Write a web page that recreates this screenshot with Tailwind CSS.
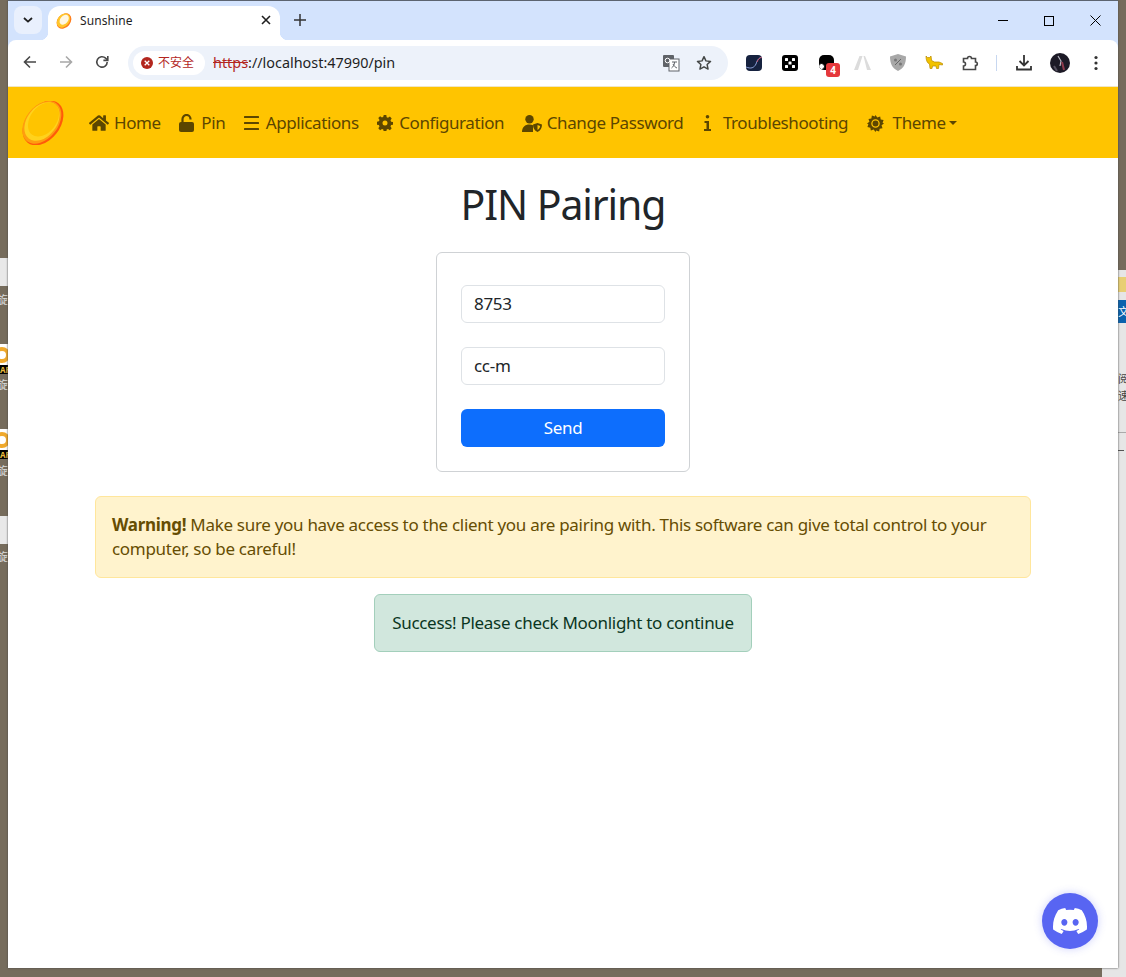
<!DOCTYPE html>
<html lang="en">

<head>
    <meta charset="UTF-8">
    <title>Sunshine</title>
    <script src="https://cdn.jsdelivr.net/npm/@tailwindcss/browser@4"></script>
</head>

<body class="relative w-[1126px] h-[977px] overflow-hidden bg-[#766c5c] font-['Noto_Sans','Noto_Sans_CJK_SC',sans-serif]">

    <!-- Desktop behind the window -->
    <div class="absolute left-0 top-[258px] w-[8px] h-[28px] bg-[#e8e8e8]"></div>
    <div class="absolute left-0 top-[293px] w-[8px] h-[14px] overflow-hidden text-[11px] leading-[14px] text-[#ddd] flex justify-end">旋</div>
    <div class="absolute left-0 top-[344px] w-[8px] h-[30px] bg-white overflow-hidden">
        <div class="w-[16px] h-[16px] -ml-[6px] mt-[3px] rounded-full border-[4px] border-[#f0a92c]"></div>
        <div class="absolute left-0 bottom-0 w-full h-[9px] bg-black text-[#e8b93c] text-[8px] font-bold leading-[9px]">AF</div>
    </div>
    <div class="absolute left-0 top-[378px] w-[8px] h-[14px] overflow-hidden text-[11px] leading-[14px] text-[#ddd] flex justify-end">旋</div>
    <div class="absolute left-0 top-[429px] w-[8px] h-[30px] bg-white overflow-hidden">
        <div class="w-[16px] h-[16px] -ml-[6px] mt-[3px] rounded-full border-[4px] border-[#f0a92c]"></div>
        <div class="absolute left-0 bottom-0 w-full h-[9px] bg-black text-[#e8b93c] text-[8px] font-bold leading-[9px]">AF</div>
    </div>
    <div class="absolute left-0 top-[464px] w-[8px] h-[14px] overflow-hidden text-[11px] leading-[14px] text-[#ddd] flex justify-end">旋</div>
    <div class="absolute left-0 top-[516px] w-[8px] h-[28px] bg-[#e8e8e8]"></div>
    <div class="absolute left-0 top-[550px] w-[8px] h-[14px] overflow-hidden text-[11px] leading-[14px] text-[#ddd] flex justify-end">旋</div>

    <div class="absolute left-[1118px] top-[270px] w-[8px] h-[707px] bg-[#e6e6e6] overflow-hidden">
        <div class="h-[15px] mt-[7px] bg-[#e8cf74]"></div>
        <div class="h-[23px] mt-[8px] bg-[#0a62ad] text-white text-[11px] leading-[23px]">文</div>
        <div class="h-[110px] border-b border-[#aaaaaa] pt-[47px] text-[11px] leading-[17px] text-[#444]">阅<br>速</div>
        <div class="mt-[17px] w-[6px] h-px bg-[#555]"></div>
    </div>
    <div class="absolute left-[1102px] top-[968px] w-[24px] h-[9px] bg-[#e6e6e6]"></div>

    <!-- Browser window -->
    <div class="absolute left-[8px] top-0 w-[1110px] h-[968px] flex flex-col bg-white border-t border-[#5c6470] shadow-[0_0_2px_#444]">

        <!-- Tab strip -->
        <div class="h-[39px] flex bg-[#d3e3fd] items-end relative shrink-0">
            <div class="absolute left-[6px] top-[5px] w-[28px] h-[28px] rounded-lg bg-[#e9f0fd] flex items-center justify-center">
                <svg width="10" height="6" viewBox="0 0 10 6" fill="none" stroke="#1f1f1f" stroke-width="1.8"><path d="M1 1l4 3.6L9 1" /></svg>
            </div>
            <div class="absolute left-[32px] top-[31px] w-[8px] h-[8px] bg-[radial-gradient(circle_at_0_0,#d3e3fd_8px,#ffffff_8.5px)]"></div>
            <div class="absolute left-[40px] top-[5px] w-[232px] h-[34px] bg-white rounded-t-xl flex items-center pl-[8px] pb-[4px]">
                <svg width="16" height="16" viewBox="0 0 16 16">
                    <ellipse cx="8" cy="8" rx="8.500" ry="6.500" transform="rotate(-50 8 8)" fill="#ff7a1a" />
                    <ellipse cx="7.500" cy="7.600" rx="7.800" ry="5.800" transform="rotate(-50 7.500 7.600)" fill="#ffc62b" />
                    <ellipse cx="8.200" cy="6.800" rx="5.600" ry="3.800" transform="rotate(-50 8.200 6.800)" fill="#fff6e2" />
                </svg>
                <span class="ml-[8px] text-[12px] tracking-[0.1px] text-[#1f1f1f]">Sunshine</span>
                <svg class="absolute right-[9px] top-[9px]" width="10" height="10" viewBox="0 0 10 10" stroke="#1f1f1f" stroke-width="1.6"><path d="M1 1l8 8M9 1l-8 8" /></svg>
            </div>
            <div class="absolute left-[272px] top-[31px] w-[8px] h-[8px] bg-[radial-gradient(circle_at_100%_0,#d3e3fd_8px,#ffffff_8.5px)]"></div>
            <svg class="absolute left-[286px] top-[13px]" width="12" height="12" viewBox="0 0 12 12" stroke="#333333" stroke-width="1.5"><path d="M6 0v12M0 6h12" /></svg>
            <div class="absolute right-0 top-0 h-[39px] flex items-center">
                <div class="w-[46px] flex justify-center"><div class="w-[10px] h-px bg-black"></div></div>
                <div class="w-[46px] flex justify-center"><div class="w-[10px] h-[10px] border border-black"></div></div>
                <div class="w-[46px] flex justify-center">
                    <svg width="11" height="11" viewBox="0 0 11 11" stroke="#000" stroke-width="1"><path d="M.5.5l10 10M10.5.5l-10 10" /></svg>
                </div>
            </div>
        </div>

        <!-- Toolbar -->
        <div class="bg-[#d3e3fd] shrink-0">
            <div class="h-[47px] bg-white flex items-center relative border-b border-[#f0e6c4] rounded-t-lg">
                <svg class="absolute left-[15px] top-[15px]" width="14" height="14" viewBox="0 0 14 14" fill="none" stroke="#474747" stroke-width="1.6"><path d="M13 7H1.500M7 1.500L1.500 7 7 12.500" /></svg>
                <svg class="absolute left-[51px] top-[15px]" width="14" height="14" viewBox="0 0 14 14" fill="none" stroke="#a8a8a8" stroke-width="1.6"><path d="M1 7h11.500M7 1.500L12.500 7 7 12.500" /></svg>
                <svg class="absolute left-[87px] top-[15px]" width="14" height="14" viewBox="0 0 14 14" fill="none" stroke="#474747" stroke-width="1.6"><path d="M12.200 7A5.200 5.200 0 1 1 10.600 3.200L12.600 5" /><path d="M12.800 1v4.400H8.400" /></svg>

                <!-- Address bar -->
                <div class="absolute left-[120px] top-[6px] w-[600px] h-[34px] rounded-full bg-[#edf2fa] flex items-center pl-[5px]">
                    <div class="h-[24px] w-[72px] bg-white rounded-full flex items-center pl-[8px]">
                        <div class="w-[12px] h-[12px] rounded-full bg-[#b3261e] flex items-center justify-center">
                            <svg width="6" height="6" viewBox="0 0 6 6" stroke="#fff" stroke-width="1.3"><path d="M.7.7l4.600 4.600M5.300.7L.7 5.300" /></svg>
                        </div>
                        <span class="ml-[5px] text-[12px] text-[#b3261e]">不安全</span>
                    </div>
                    <span class="ml-[8px] -mt-[1px] text-[14.4px] text-[#1f1f1f]"><span class="line-through text-[#b3261e]">https</span>://localhost:47990/pin</span>

                    <svg class="absolute left-[534px] top-[8px]" width="18" height="18" viewBox="0 0 18 18">
                        <rect x="1" y="1" width="11" height="12" rx="1" fill="#5f6368" />
                        <rect x="7" y="5" width="10" height="12" fill="#fff" stroke="#5f6368" />
                        <path d="M10 8h5M12.500 8c0 3-1.500 5-3 6M11 10c1 2 2.500 3.500 4 4" stroke="#5f6368" fill="none" />
                        <circle cx="5.500" cy="6.500" r="2.300" fill="none" stroke="#fff" />
                    </svg>
                    <svg class="absolute left-[568px] top-[9px]" width="16" height="16" viewBox="0 0 24 24" fill="none" stroke="#444746" stroke-width="2.200" stroke-linejoin="round"><path d="M12 2.500l2.900 6.300 6.900.8-5.100 4.700 1.400 6.800-6.100-3.400-6.100 3.400 1.400-6.800L2.200 9.600l6.900-.8z" /></svg>
                </div>

                <!-- Extensions -->
                <div class="absolute left-[738px] top-[15px] w-[16px] h-[16px] rounded-[4px] bg-[#16223f] overflow-hidden">
                    <svg width="16" height="16" viewBox="0 0 16 16" fill="none"><path d="M0 12c5 2 8 1 10-3 1-3 2-6 6-7" stroke="#8ea2d8" /><path d="M11 7c1-2 2-4 5-5" stroke="#c8506a" /></svg>
                </div>
                <div class="absolute left-[774px] top-[15px] w-[16px] h-[16px] rounded-[3px] bg-black">
                    <svg width="16" height="16" viewBox="0 0 16 16" fill="#fff"><rect x="3" y="3" width="3" height="3" rx=".6" /><rect x="10" y="3" width="3" height="3" rx=".6" /><rect x="6.500" y="6.500" width="3" height="3" rx=".6" /><rect x="3" y="10" width="3" height="3" rx=".6" /><rect x="10" y="10" width="3" height="3" rx=".6" /></svg>
                </div>
                <div class="absolute left-[811px] top-[15px] w-[15px] h-[15px] rounded-[5px] bg-black overflow-hidden">
                    <div class="absolute -left-[1px] top-[8px] w-[7px] h-[7px] rounded-full bg-white border border-black"></div>
                </div>
                <div class="absolute left-[818px] top-[23px] w-[14px] h-[14px] rounded-[3px] bg-[#e5383b] text-white text-[10px] font-bold leading-[14px] text-center">4</div>
                <svg class="absolute left-[846px] top-[15px]" width="17" height="16" viewBox="0 0 17 16" fill="#dcdcdc"><path d="M0 15L5.500 1h3L4 15zM17 15L11 1H9.500L13 15z" /></svg>
                <svg class="absolute left-[882px] top-[14px]" width="16" height="17" viewBox="0 0 16 17"><path d="M8 0l8 2.500c0 7-2 11.500-8 14.500C2 14 0 9.500 0 2.500z" fill="#a8a8a8" /><path d="M5 11l6-6" stroke="#666" /><circle cx="5.500" cy="6" r="1.500" fill="#777" /><circle cx="10.500" cy="10" r="1.500" fill="#777" /></svg>
                <svg class="absolute left-[917px] top-[15px]" width="18" height="15" viewBox="0 0 18 15" fill="#f2c200" stroke="#b98a00" stroke-width=".7"><path d="M1 1l1.500 1.500h2L6 1l.6 4.500 3 1.500h4.400l3.500 1.500V10l-3.500-.5-.5 4h-2l-.5-2.500H7.500L7 13.500H5L4.500 9C2 8 1 5 1 1z" /></svg>
                <svg class="absolute left-[954px] top-[14px]" width="17" height="17" viewBox="0 0 17 17" fill="none" stroke="#474747" stroke-width="1.600"><path d="M1.500 4.500h4a2 2 0 0 1 4 0h4v3.500a1.800 1.800 0 0 1 0 3.600v3.900h-12v-3.500a2 2 0 0 0 0-4z" /></svg>
                <div class="absolute left-[988px] top-[15px] w-px h-[16px] bg-[#c7d7f0]"></div>
                <svg class="absolute left-[1008px] top-[14px]" width="16" height="17" viewBox="0 0 16 17" fill="none" stroke="#333" stroke-width="1.800"><path d="M8 1v10M3.500 7L8 11.500 12.500 7M1 12v3.500h14V12" /></svg>
                <div class="absolute left-[1042px] top-[13px] w-[20px] h-[20px] rounded-full bg-[#1c1a26] overflow-hidden">
                    <svg width="20" height="20" viewBox="0 0 20 20" fill="none"><path d="M8 3l3 5-1 5" stroke="#b8b8c4" stroke-width="1.200" /><path d="M12 9l2 8" stroke="#8c3a4c" stroke-width="2" /><path d="M4 13l3 5" stroke="#55505f" stroke-width="2" /></svg>
                </div>
                <svg class="absolute left-[1086px] top-[15px]" width="4" height="16" viewBox="0 0 4 16" fill="#333"><circle cx="2" cy="2.500" r="1.600" /><circle cx="2" cy="8" r="1.600" /><circle cx="2" cy="13.500" r="1.600" /></svg>
            </div>
        </div>

        <!-- Page -->
        <nav class="h-[71px] bg-[#ffc400] flex items-center text-[#5c4600] text-[17px] tracking-[-0.4px] shrink-0">
            <svg class="ml-[14px]" width="42" height="44" viewBox="0 0 42 44">
                <ellipse cx="21" cy="22" rx="25" ry="17" transform="rotate(-52 21 22)" fill="#ff5a0a" />
                <ellipse cx="19.800" cy="21.400" rx="24" ry="16.200" transform="rotate(-52 19.800 21.400)" fill="#ff9d0f" />
                <ellipse cx="20" cy="20.500" rx="21.500" ry="14.800" transform="rotate(-52 20 20.500)" fill="#ffd21c" />
                <ellipse cx="21.500" cy="18.500" rx="19" ry="13" transform="rotate(-52 21.500 18.500)" fill="#ffc400" />
            </svg>
            <div class="flex items-center ml-[26px] gap-[18.5px] mt-[1px]">
                <a href="#" class="flex items-center">
                    <svg class="w-[20px] h-[18px] -ml-[1px]" viewBox="0 0 576 512" fill="#5c4600"><path d="M280.400 148.300L96 300.100V464a16 16 0 0 0 16 16l112.100-.3a16 16 0 0 0 15.900-16V368a16 16 0 0 1 16-16h64a16 16 0 0 1 16 16v95.600a16 16 0 0 0 16 16.100L464 480a16 16 0 0 0 16-16V300L295.700 148.300a12.200 12.200 0 0 0-15.300 0zM571.600 251.500L488 182.600V44a12 12 0 0 0-12-12h-56a12 12 0 0 0-12 12v72.600L318.500 43a48 48 0 0 0-61 0L4.300 251.500a12 12 0 0 0-1.600 16.900l25.500 31A12 12 0 0 0 45.200 301l235.200-193.700a12.200 12.200 0 0 1 15.300 0L530.900 301a12 12 0 0 0 16.900-1.600l25.500-31a12 12 0 0 0-1.700-16.900z" /></svg>
                    <span class="ml-[5px]">Home</span>
                </a>
                <a href="#" class="flex items-center">
                    <svg class="w-[15px] h-[18px]" viewBox="0 0 15 18" fill="#5c4600"><path d="M2 8h11a2 2 0 0 1 2 2v6a2 2 0 0 1-2 2H2a2 2 0 0 1-2-2v-6a2 2 0 0 1 2-2z" /><path d="M3.500 9V5a4 4 0 0 1 8 0v.5" fill="none" stroke="#5c4600" stroke-width="2.200" /></svg>
                    <span class="ml-[7px]">Pin</span>
                </a>
                <a href="#" class="flex items-center">
                    <svg class="w-[15px] h-[14px]" viewBox="0 0 15 14" fill="#5c4600"><rect y="0" width="15" height="2" rx=".5" /><rect y="6" width="15" height="2" rx=".5" /><rect y="12" width="15" height="2" rx=".5" /></svg>
                    <span class="ml-[7px]">Applications</span>
                </a>
                <a href="#" class="flex items-center">
                    <svg class="w-[16px] h-[16px]" viewBox="0 0 16 16" fill="#5c4600"><path fill-rule="evenodd" d="M6.700 0h2.600l.4 2.200 1.300.6 1.900-1.200 1.800 1.900-1.200 1.800.6 1.400 2 .4v2.600l-2 .4-.6 1.400 1.200 1.800-1.800 1.900-1.900-1.200-1.300.6-.4 2.200H6.700l-.4-2.200-1.300-.6-1.900 1.200-1.800-1.900 1.200-1.800-.6-1.400-2-.4V6.700l2-.4.6-1.400L1.300 3.100l1.800-1.900L5 2.400l1.300-.6zM8 5.500a2.500 2.500 0 1 0 0 5 2.500 2.500 0 0 0 0-5z" /></svg>
                    <span class="ml-[6px]">Configuration</span>
                </a>
                <a href="#" class="flex items-center -ml-[1px]">
                    <svg class="w-[20px] h-[17px]" viewBox="0 0 20 17" fill="#5c4600"><circle cx="7.500" cy="4.200" r="4.200" /><path d="M0 17c0-5 3-7.500 7.500-7.500 1.300 0 2.500.2 3.500.7V17z" /><path fill-rule="evenodd" d="M15.500 8l4.500 1.600c0 3.500-1.400 6-4.500 7.400-3.100-1.400-4.500-3.900-4.500-7.400zm0 2v5c1.600-1 2.500-2.400 2.600-4.100z" /></svg>
                    <span class="ml-[5px]">Change Password</span>
                </a>
                <a href="#" class="flex items-center ml-[2px]">
                    <svg class="w-[7px] h-[16px]" viewBox="0 0 7 16" fill="#5c4600"><circle cx="3.500" cy="1.800" r="1.800" /><path d="M.5 6h4.500v8H7v2H0v-2h2.500V8H.5z" /></svg>
                    <span class="ml-[12px]">Troubleshooting</span>
                </a>
                <a href="#" class="flex items-center">
                    <svg class="w-[17px] h-[17px]" viewBox="0 0 16 16" fill="#5c4600"><path fill-rule="evenodd" d="M8 0l1.700 2.300 2.700-.9.500 2.800 2.700.5-.9 2.700L16 8l-2.300 1.700.9 2.700-2.700.5-.5 2.700-2.700-.9L8 16l-1.700-2.300-2.700.9-.5-2.700-2.700-.5.9-2.700L0 8l2.300-1.600-.9-2.700 2.700-.5.5-2.800 2.700.9zM8 4a4 4 0 1 0 0 8 4 4 0 0 0 0-8z" /><circle cx="8" cy="8" r="2.800" /></svg>
                    <span class="ml-[9px]">Theme</span>
                    <span class="ml-[3px] w-0 h-0 border-x-[4px] border-x-transparent border-t-[4px] border-t-[#5c4600]"></span>
                </a>
            </div>
        </nav>

        <main class="flex-1 flex flex-col items-center relative">
            <h1 class="mt-[20px] text-[41px] tracking-[-1.1px] leading-[53px] text-[#212529]">PIN Pairing</h1>

            <form class="mt-[21px] w-[254px] h-[220px] border border-[#cfd2d5] rounded-[6px] px-[24px] pt-[32px] flex flex-col">
                <input type="text" value="8753" class="h-[38px] w-full border border-[#dee2e6] rounded-[6px] px-[12px] pb-[2px] text-[17px] tracking-[-0.3px] text-[#212529]">
                <input type="text" value="cc-m" class="mt-[24px] h-[38px] w-full border border-[#dee2e6] rounded-[6px] px-[12px] pb-[2px] text-[17px] tracking-[-0.3px] text-[#212529]">
                <button type="button" class="mt-[24px] h-[38px] w-full rounded-[6px] bg-[#0d6efd] text-white text-[17px] tracking-[-0.3px]">Send</button>
            </form>

            <div class="mt-[24px] w-[936px] h-[82px] bg-[#fff3cd] border border-[#ffe69c] rounded-[6px] px-[16px] pt-[16px] text-[17px] tracking-[-0.3px] leading-[24px] text-[#664d03]">
                <b>Warning!</b> Make sure you have access to the client you are pairing with. This software can give total control to your computer, so be careful!
            </div>

            <div class="mt-[16px] w-[378px] h-[58px] bg-[#d1e7dd] border border-[#a3cfbb] rounded-[6px] flex items-center justify-center text-[17px] tracking-[-0.3px] text-[#0a3622]">
                Success! Please check Moonlight to continue
            </div>

            <!-- Discord button -->
            <div class="absolute left-[1034px] top-[735px] w-[56px] h-[56px] rounded-full bg-[#5865f2] shadow-[0_0_8px_rgba(88,101,242,0.3)] flex items-center justify-center">
                <svg width="34" height="26" viewBox="0 0 127.140 96.360" fill="#fff"><path d="M107.700 8.070A105.150 105.150 0 0 0 81.470 0a72.060 72.060 0 0 0-3.360 6.830 97.680 97.680 0 0 0-29.110 0A72.370 72.370 0 0 0 45.640 0a105.890 105.890 0 0 0-26.250 8.090C2.790 32.650-1.710 56.600.54 80.210a105.730 105.730 0 0 0 32.170 16.150 77.700 77.700 0 0 0 6.890-11.110 68.420 68.420 0 0 1-10.850-5.180c.91-.66 1.800-1.340 2.660-2a75.570 75.570 0 0 0 64.320 0c.87.710 1.760 1.390 2.660 2a68.680 68.680 0 0 1-10.870 5.190 77 77 0 0 0 6.890 11.100 105.250 105.250 0 0 0 32.190-16.140c2.640-27.380-4.510-51.110-18.900-72.150zM42.450 65.690C36.180 65.690 31 60 31 53s5-12.740 11.430-12.740S54 46 53.890 53s-5.050 12.690-11.440 12.690zm42.240 0C78.410 65.690 73.250 60 73.250 53s5-12.740 11.440-12.740S96.230 46 96.120 53s-5.040 12.690-11.430 12.690z" /></svg>
            </div>
        </main>
    </div>
</body>

</html>
